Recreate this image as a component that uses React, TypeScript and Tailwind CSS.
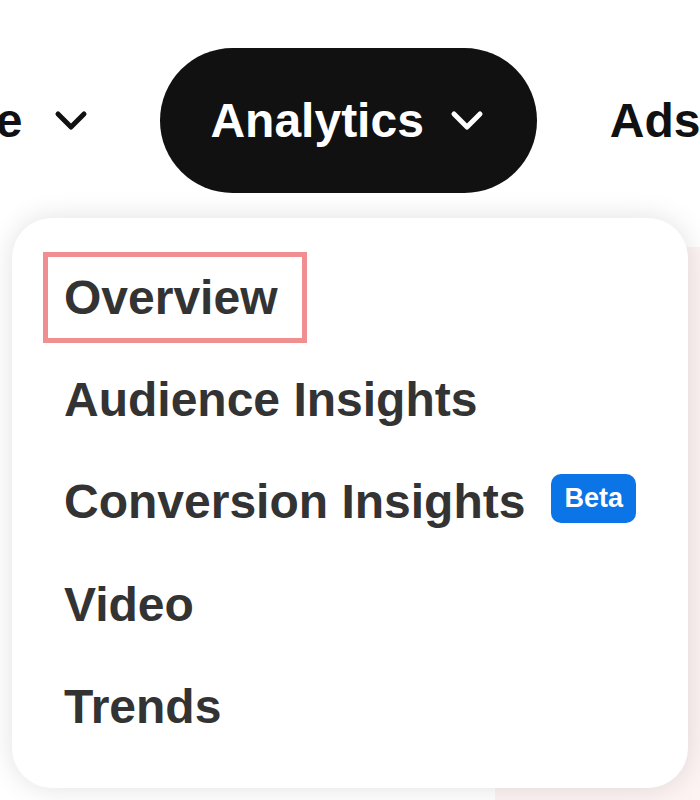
import React from 'react';

const Chevron = ({ color }: { color: string }) => (
  <svg width="36" height="24" viewBox="0 0 36 24" fill="none" className="shrink-0">
    <polyline points="5,5 18,18 31,5" stroke={color} strokeWidth="5" strokeLinecap="round" strokeLinejoin="round" />
  </svg>
);

const items = ['Overview', 'Audience Insights', 'Conversion Insights', 'Video', 'Trends'];

export default function App() {
  return (
    <div className="relative w-[700px] h-[800px] overflow-hidden bg-white font-['Liberation_Sans',Arial,sans-serif] font-bold">
      {/* faint panel behind the menu */}
      <div className="absolute left-[495px] top-[247px] w-[300px] h-[700px] rounded-tl-[40px] bg-[#fcf3f2]"></div>

      {/* Top nav */}
      <div className="relative flex items-center h-[145px] mt-[48px] whitespace-nowrap text-[48px] text-[#111]">
        <div className="flex items-center gap-[31px] -ml-[127px]">
          <span>Create</span>
          <Chevron color="#111" />
        </div>
        <div className="flex items-center gap-[25px] h-[145px] ml-[71px] pl-[50px] pr-[52px] rounded-full bg-[#111] text-white">
          <span>Analytics</span>
          <Chevron color="#fff" />
        </div>
        <span className="ml-[73px]">Ads</span>
      </div>

      {/* Dropdown */}
      <div className="relative mx-[12px] mt-[25px] h-[570px] rounded-[40px] bg-white shadow-[0_0_28px_rgba(0,0,0,0.12)] pt-[28px] pl-[52px] text-[48px] text-[#333]">
        {items.map((label, i) => (
          <div key={label} className="flex items-center h-[102.5px] whitespace-nowrap">
            {i === 0 ? (
              <span className="-ml-[21px] border-[5px] border-[#ef8f8f] pl-[16px] pr-[25px] py-[13px] leading-[55px]">{label}</span>
            ) : (
              <span>{label}</span>
            )}
            {label === 'Conversion Insights' && (
              <span className="ml-[26px] -mt-[8px] flex items-center h-[49px] px-[13px] rounded-[10px] bg-[#0b74e6] text-white text-[27px]">Beta</span>
            )}
          </div>
        ))}
      </div>
    </div>
  );
}
